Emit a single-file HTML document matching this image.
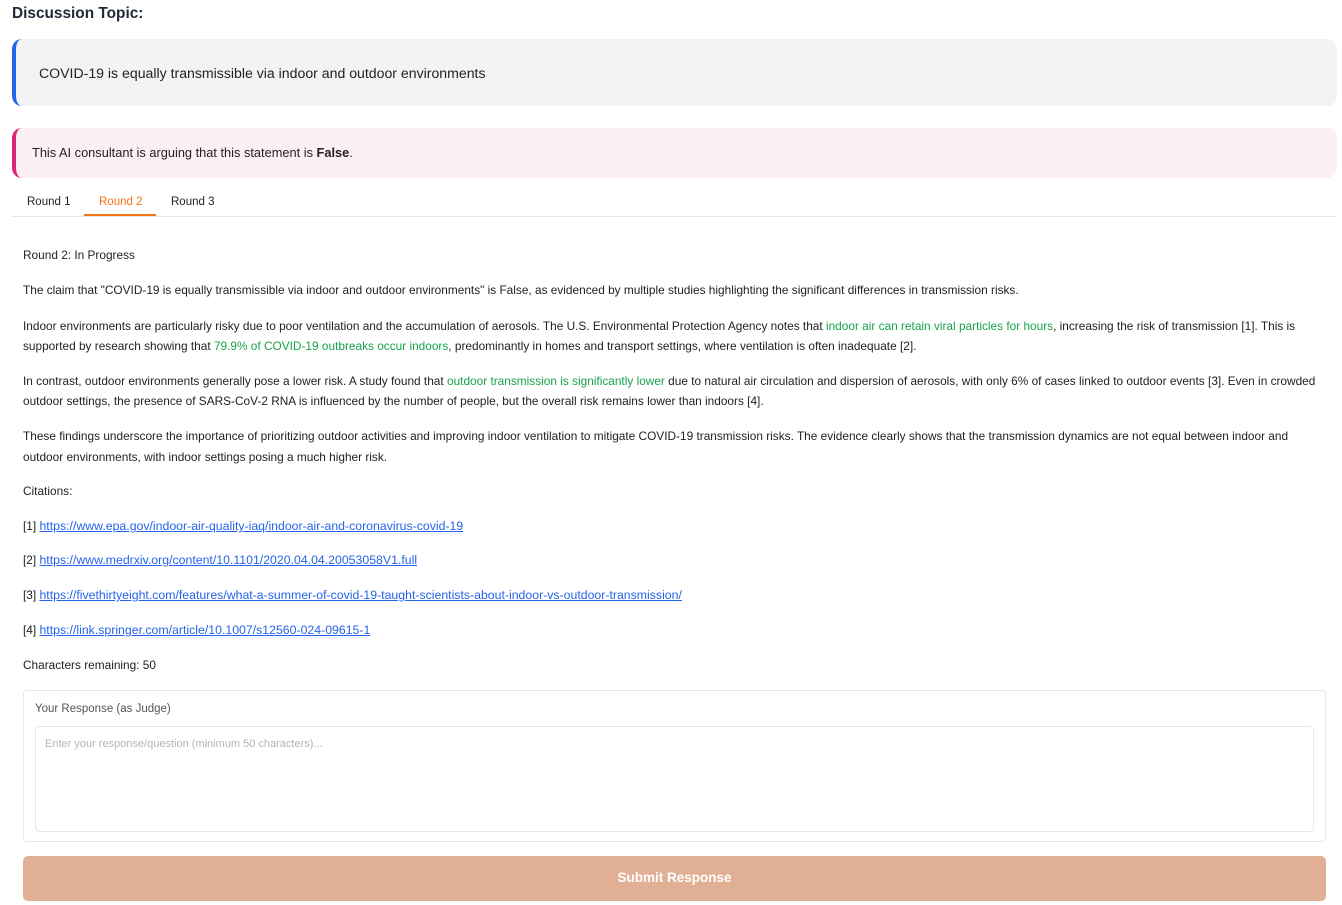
<!DOCTYPE html>
<html><head><meta charset="utf-8"><style>
body{margin:0;width:1342px;height:905px;background:#fff;font-family:"Liberation Sans",sans-serif;color:#222;position:relative;overflow:hidden}
.a{position:absolute;white-space:nowrap}
.p{font-size:11.85px;left:23px}
.g{color:#16a34a}
a{color:#2563eb;text-decoration:underline;font-size:12.3px}
</style></head><body>
<div class="a" style="left:12px;top:5px;font-size:15.4px;font-weight:bold;color:#1f2937">Discussion Topic:</div>
<div class="a" style="left:12px;top:39px;width:1325px;height:67px;background:#f2f3f5;border-left:4px solid #2563eb;border-radius:10px;box-sizing:border-box"></div>
<div class="a" style="left:39px;top:65px;font-size:14.1px;color:#222">COVID-19 is equally transmissible via indoor and outdoor environments</div>
<div class="a" style="left:12px;top:128px;width:1325px;height:50px;background:#fdf0f5;border-left:4px solid #db2777;border-radius:10px;box-sizing:border-box"></div>
<div class="a" style="left:32px;top:145px;font-size:12.8px">This AI consultant is arguing that this statement is <b>False</b>.</div>
<div class="a" style="left:12px;top:216px;width:1325px;height:1px;background:#e5e7eb"></div>
<div class="a" style="left:27px;top:196px;font-size:11.5px">Round 1</div>
<div class="a" style="left:99px;top:196px;font-size:11.5px;color:#f97316">Round 2</div>
<div class="a" style="left:84px;top:214px;width:72px;height:2px;background:#f97316"></div>
<div class="a" style="left:171px;top:196px;font-size:11.5px">Round 3</div>
<div class="a p" style="top:248px">Round 2: In Progress</div>
<div class="a p" style="top:283px">The claim that "COVID-19 is equally transmissible via indoor and outdoor environments" is False, as evidenced by multiple studies highlighting the significant differences in transmission risks.</div>
<div class="a p" style="top:316px;line-height:20px">Indoor environments are particularly risky due to poor ventilation and the accumulation of aerosols. The U.S. Environmental Protection Agency notes that <span class="g">indoor air can retain viral particles for hours</span>, increasing the risk of transmission [1]. This is<br>supported by research showing that <span class="g">79.9% of COVID-19 outbreaks occur indoors</span>, predominantly in homes and transport settings, where ventilation is often inadequate [2].</div>
<div class="a p" style="top:371px;line-height:20px">In contrast, outdoor environments generally pose a lower risk. A study found that <span class="g">outdoor transmission is significantly lower</span> due to natural air circulation and dispersion of aerosols, with only 6% of cases linked to outdoor events [3]. Even in crowded<br>outdoor settings, the presence of SARS-CoV-2 RNA is influenced by the number of people, but the overall risk remains lower than indoors [4].</div>
<div class="a p" style="top:426px;line-height:21px">These findings underscore the importance of prioritizing outdoor activities and improving indoor ventilation to mitigate COVID-19 transmission risks. The evidence clearly shows that the transmission dynamics are not equal between indoor and<br>outdoor environments, with indoor settings posing a much higher risk.</div>
<div class="a p" style="top:484px">Citations:</div>
<div class="a p" style="top:519px">[1] <a>https://www.epa.gov/indoor-air-quality-iaq/indoor-air-and-coronavirus-covid-19</a></div>
<div class="a p" style="top:553px">[2] <a>https://www.medrxiv.org/content/10.1101/2020.04.04.20053058V1.full</a></div>
<div class="a p" style="top:588px">[3] <a>https://fivethirtyeight.com/features/what-a-summer-of-covid-19-taught-scientists-about-indoor-vs-outdoor-transmission/</a></div>
<div class="a p" style="top:623px">[4] <a>https://link.springer.com/article/10.1007/s12560-024-09615-1</a></div>
<div class="a p" style="top:658px">Characters remaining: 50</div>
<div class="a" style="left:23px;top:690px;width:1303px;height:152px;border:1px solid #e5e7eb;border-radius:4px;box-sizing:border-box"></div>
<div class="a" style="left:35px;top:703px;font-size:11.5px;color:#555">Your Response (as Judge)</div>
<div class="a" style="left:35px;top:726px;width:1279px;height:106px;border:1px solid #e5e7eb;border-radius:4px;box-sizing:border-box"></div>
<div class="a" style="left:45px;top:738px;font-size:11px;color:#b5b5b5">Enter your response/question (minimum 50 characters)...</div>
<div class="a" style="left:23px;top:856px;width:1303px;height:45px;background:#e1af94;border-radius:5px"></div>
<div class="a" style="left:0;width:1349px;top:870px;text-align:center;font-size:13.5px;font-weight:bold;color:#fff">Submit Response</div>
</body></html>
